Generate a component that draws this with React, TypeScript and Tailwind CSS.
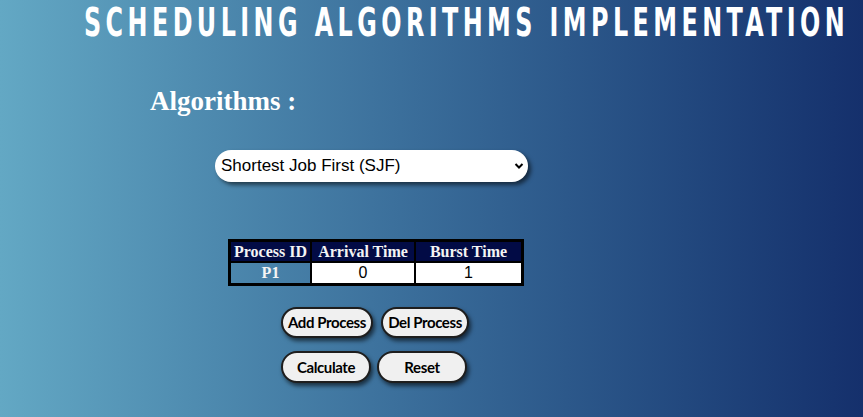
import { useState } from 'react';

const rows = [{ id: 'P1', arrival: '0', burst: '1' }];

export default function App() {
  const [algo, setAlgo] = useState('sjf');

  return (
    <div className="min-h-[417px] w-full bg-gradient-to-r from-[#63a8c4] to-[#15306c] overflow-hidden">
      <h1 className="pt-[4px] pl-[84px] h-[42px] whitespace-nowrap">
        <span className="inline-block origin-left scale-x-[0.68] text-[39px] leading-[38px] font-bold tracking-[6.5px] text-white [font-family:'DejaVu_Sans_Condensed','DejaVu_Sans',sans-serif]">
          SCHEDULING ALGORITHMS IMPLEMENTATION
        </span>
      </h1>

      <h2 className="mt-[46px] ml-[150px] text-[27px] leading-[27px] font-bold text-white [font-family:'Liberation_Serif',serif]">
        Algorithms :
      </h2>

      <div className="mt-[35px] ml-[215px] relative w-[313px] h-[32px]">
        <select
          value={algo}
          onChange={(e) => setAlgo(e.target.value)}
          className="w-full h-full appearance-none rounded-full bg-white pl-[6px] text-[17px] text-black shadow-[3px_3px_4px_rgba(0,0,0,0.55)] outline-none [font-family:'Liberation_Sans',Arial,sans-serif]"
        >
          <option value="fcfs">First Come First Serve (FCFS)</option>
          <option value="sjf">Shortest Job First (SJF)</option>
          <option value="rr">Round Robin (RR)</option>
        </select>
        <svg
          className="absolute right-[4px] top-[11px] pointer-events-none"
          width="10"
          height="10"
          viewBox="0 0 10 10"
        >
          <path d="M1.5 3 L5 6.5 L8.5 3" fill="none" stroke="#000" strokeWidth="2" />
        </svg>
      </div>

      <table className="mt-[57px] ml-[228px] border-2 border-black border-separate border-spacing-0 [font-family:'Liberation_Serif',serif]">
        <thead>
          <tr className="text-[16px] leading-[18px] font-bold text-[#f4f4f4]">
            <th className="w-[81px] h-[21px] p-0 bg-[#020b45] border border-black">Process ID</th>
            <th className="w-[104px] h-[21px] p-0 bg-[#020b45] border border-black">Arrival Time</th>
            <th className="w-[107px] h-[21px] p-0 bg-[#020b45] border border-black">Burst Time</th>
          </tr>
        </thead>
        <tbody>
          {rows.map((r) => (
            <tr key={r.id}>
              <td className="h-[22px] p-0 border border-black text-center text-[16px] leading-[18px] font-bold text-[#f4f4f4]">{r.id}</td>
              <td className="h-[22px] border border-black p-0">
                <input
                  defaultValue={r.arrival}
                  className="block w-full h-[20px] bg-white text-center text-[16px] text-black outline-none [font-family:'Liberation_Sans',Arial,sans-serif]"
                />
              </td>
              <td className="h-[22px] border border-black p-0">
                <input
                  defaultValue={r.burst}
                  className="block w-full h-[20px] bg-white text-center text-[16px] text-black outline-none [font-family:'Liberation_Sans',Arial,sans-serif]"
                />
              </td>
            </tr>
          ))}
        </tbody>
      </table>

      <div className="mt-[21px] ml-[281px] flex gap-[8px]">
        <button className="w-[92px] h-[31px] rounded-full border-2 border-[#1e1e1e] bg-[#f0f0f0] text-[15px] tracking-[-0.4px] font-bold text-black shadow-[2px_3px_4px_rgba(0,0,0,0.6)] [font-family:Lato,sans-serif]">
          Add Process
        </button>
        <button className="w-[88px] h-[31px] rounded-full border-2 border-[#1e1e1e] bg-[#f0f0f0] text-[15px] tracking-[-0.4px] font-bold text-black shadow-[2px_3px_4px_rgba(0,0,0,0.6)] [font-family:Lato,sans-serif]">
          Del Process
        </button>
      </div>
      <div className="mt-[13px] ml-[281px] flex gap-[6px]">
        <button className="w-[90px] h-[32px] rounded-full border-2 border-[#1e1e1e] bg-[#f0f0f0] text-[15px] tracking-[-0.4px] font-bold text-black shadow-[2px_3px_4px_rgba(0,0,0,0.6)] [font-family:Lato,sans-serif]">
          Calculate
        </button>
        <button className="w-[90px] h-[32px] rounded-full border-2 border-[#1e1e1e] bg-[#f0f0f0] text-[15px] tracking-[-0.4px] font-bold text-black shadow-[2px_3px_4px_rgba(0,0,0,0.6)] [font-family:Lato,sans-serif]">
          Reset
        </button>
      </div>
    </div>
  );
}
